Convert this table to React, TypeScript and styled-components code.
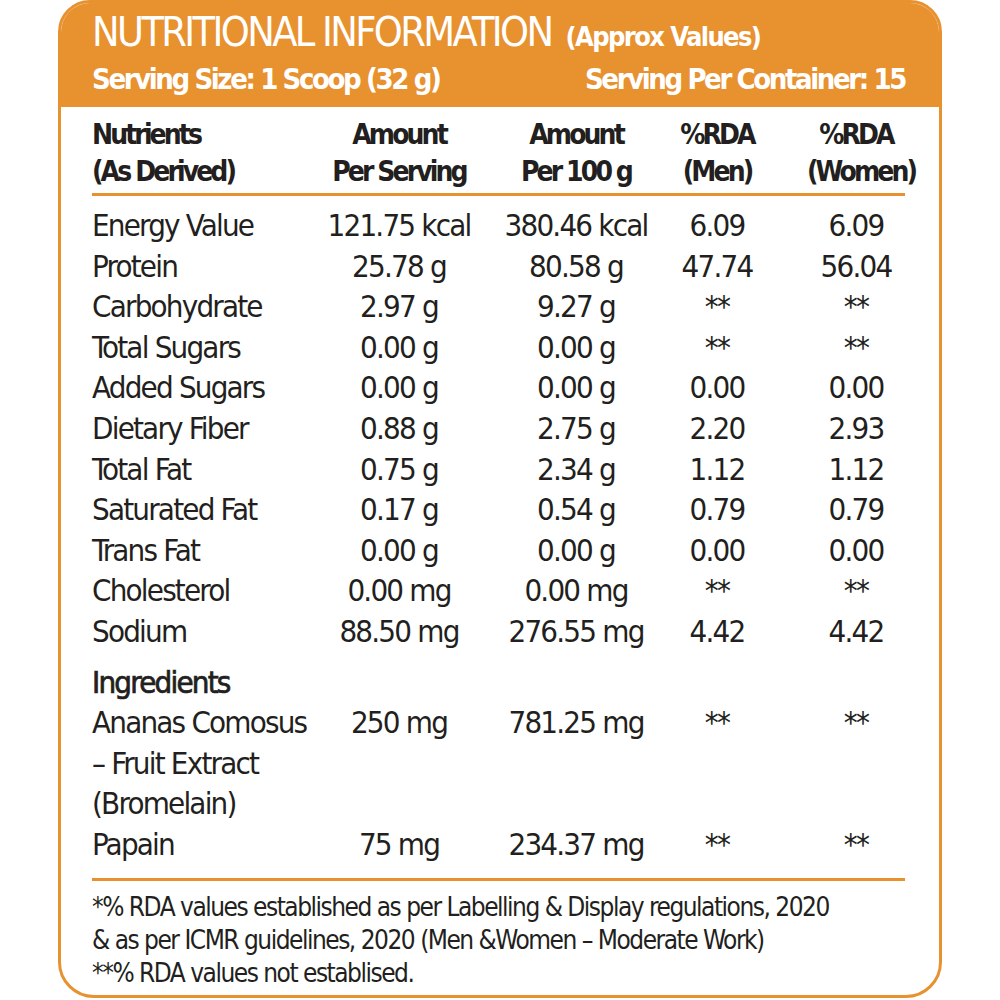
import styled, { createGlobalStyle } from 'styled-components';

const ORANGE = '#e8912f';
const INK = '#231f20';
const FONT = `"DejaVu Sans Condensed", "Liberation Sans Narrow", "Roboto", sans-serif`;
const COLUMNS = '228px 158px 196px 86px 145px';

const GlobalStyle = createGlobalStyle`
  html, body {
    margin: 0;
    padding: 0;
    background: #ffffff;
  }

  body {
    font-family: ${FONT};
    color: ${INK};
  }
`;

type Row = [string, string, string, string, string];

const nutrients: Row[] = [
  ['Energy Value', '121.75 kcal', '380.46 kcal', '6.09', '6.09'],
  ['Protein', '25.78 g', '80.58 g', '47.74', '56.04'],
  ['Carbohydrate', '2.97 g', '9.27 g', '**', '**'],
  ['Total Sugars', '0.00 g', '0.00 g', '**', '**'],
  ['Added Sugars', '0.00 g', '0.00 g', '0.00', '0.00'],
  ['Dietary Fiber', '0.88 g', '2.75 g', '2.20', '2.93'],
  ['Total Fat', '0.75 g', '2.34 g', '1.12', '1.12'],
  ['Saturated Fat', '0.17 g', '0.54 g', '0.79', '0.79'],
  ['Trans Fat', '0.00 g', '0.00 g', '0.00', '0.00'],
  ['Cholesterol', '0.00 mg', '0.00 mg', '**', '**'],
  ['Sodium', '88.50 mg', '276.55 mg', '4.42', '4.42'],
];

const ingredients: { name: string[]; values: string[] }[] = [
  {
    name: ['Ananas Comosus', '– Fruit Extract', '(Bromelain)'],
    values: ['250 mg', '781.25 mg', '**', '**'],
  },
  {
    name: ['Papain'],
    values: ['75 mg', '234.37 mg', '**', '**'],
  },
];

const headings = [
  ['Nutrients', '(As Derived)'],
  ['Amount', 'Per Serving'],
  ['Amount', 'Per 100 g'],
  ['%RDA', '(Men)'],
  ['%RDA', '(Women)'],
];

const NutritionLabel = () => {
  return (
    <Card>
      <Header>
        <TitleRow>
          <Title>NUTRITIONAL INFORMATION</Title>
          <Subtitle>(Approx Values)</Subtitle>
        </TitleRow>
        <ServingRow>
          <span>Serving Size: 1 Scoop (32 g)</span>
          <span>Serving Per Container: 15</span>
        </ServingRow>
      </Header>

      <Body>
        <HeadRow>
          {headings.map(([top, bottom], i) => (
            <Cell key={i} $first={i === 0} $last={i === 4}>
              {top}
              <br />
              {bottom}
            </Cell>
          ))}
        </HeadRow>

        <Rule />

        <Rows>
          {nutrients.map((row) => (
            <DataRow key={row[0]}>
              {row.map((value, i) => (
                <Cell key={i} $first={i === 0} $last={i === 4}>
                  {value}
                </Cell>
              ))}
            </DataRow>
          ))}

          <SectionTitle>Ingredients</SectionTitle>

          {ingredients.map((item) => (
            <DataRow key={item.name[0]}>
              <Cell $first>
                {item.name.map((line, i) => (
                  <div key={i}>{line}</div>
                ))}
              </Cell>
              {item.values.map((value, i) => (
                <Cell key={i} $last={i === 3}>
                  {value}
                </Cell>
              ))}
            </DataRow>
          ))}
        </Rows>

        <Rule />

        <Notes>
          <div>*% RDA values established as per Labelling &amp; Display regulations, 2020</div>
          <div>&amp; as per ICMR guidelines, 2020 (Men &amp;Women – Moderate Work)</div>
          <div>**% RDA values not establised.</div>
        </Notes>
      </Body>
    </Card>
  );
};

const Card = styled.div`
  box-sizing: border-box;
  width: 884px;
  height: 998px;
  margin-left: 58px;
  border: 3px solid ${ORANGE};
  border-radius: 32px 32px 36px 36px;
  overflow: hidden;
  display: flex;
  flex-direction: column;
  background: #ffffff;
`;

const Header = styled.header`
  flex-shrink: 0;
  box-sizing: border-box;
  height: 104px;
  padding: 2px 34px 0 31px;
  background: ${ORANGE};
  color: #ffffff;
`;

const TitleRow = styled.div`
  display: flex;
  align-items: baseline;
  gap: 14px;
  height: 54px;
`;

const Title = styled.h1`
  margin: 0;
  font-size: 41px;
  font-weight: 400;
  letter-spacing: -2.6px;
  line-height: 54px;
`;

const Subtitle = styled.span`
  font-size: 27px;
  font-weight: 700;
  letter-spacing: -1.6px;
`;

const ServingRow = styled.div`
  display: flex;
  justify-content: space-between;
  font-size: 29px;
  font-weight: 700;
  letter-spacing: -2.4px;
  line-height: 40px;
`;

const Body = styled.div`
  flex: 1;
  padding: 9px 34px 0 31px;
`;

const HeadRow = styled.div`
  display: grid;
  grid-template-columns: ${COLUMNS};
  font-size: 28px;
  font-weight: 700;
  letter-spacing: -2.9px;
  line-height: 37px;
`;

const Rule = styled.div`
  height: 3px;
  margin-top: 3px;
  background: ${ORANGE};
`;

const Rows = styled.div`
  padding: 9px 0 10px;
  font-size: 31px;
  letter-spacing: -1.8px;
  line-height: 40.6px;
`;

const DataRow = styled.div`
  display: grid;
  grid-template-columns: ${COLUMNS};
  align-items: start;
`;

const Cell = styled.div<{ $first?: boolean; $last?: boolean }>`
  text-align: ${({ $first }) => ($first ? 'left' : 'center')};
  white-space: nowrap;
  ${({ $last }) => $last && 'justify-self: end; width: 98px;'}
`;

const SectionTitle = styled.div`
  margin-top: 10px;
  font-weight: 400;
  -webkit-text-stroke: 0.7px ${INK};
`;

const Notes = styled.div`
  padding-top: 10px;
  font-size: 26px;
  letter-spacing: -1.5px;
  line-height: 33px;
`;

export default function App() {
  return (
    <>
      <GlobalStyle />
      <NutritionLabel />
    </>
  );
}
